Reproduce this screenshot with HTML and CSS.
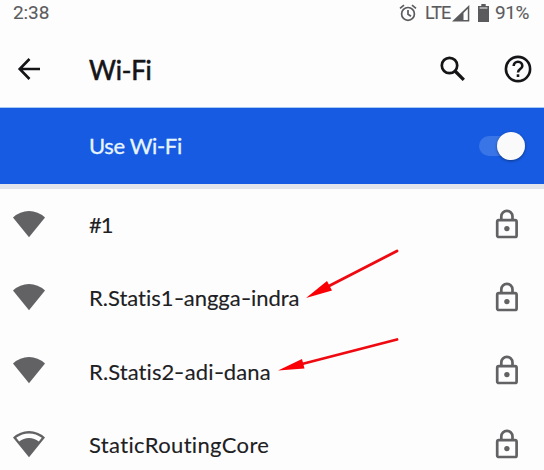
FILE: index.html
```html
<!DOCTYPE html>
<html lang="en">
<head>
<meta charset="utf-8">
<title>Wi-Fi</title>
<link rel="stylesheet" href="styles.css">
</head>
<body>
<svg width="0" height="0" class="defs">
  <symbol id="wifi" viewBox="0 0 34 28"><path d="M1 7.500Q8 1 17 1T33 7.500L17 27.300Z"/></symbol>
  <symbol id="wifi-mid" viewBox="0 0 34 28"><path fill-rule="evenodd" d="M1 7.500Q8 1 17 1T33 7.500L17 27.300ZM4.200 7.700L7.200 11.500Q11.500 8 17 8T26.800 11.500L29.800 7.700Q24 3.400 17 3.400T4.200 7.700Z"/></symbol>
  <symbol id="lock" viewBox="0 0 24 30"><g fill="none" stroke="currentColor" stroke-width="2.700"><rect x="2.200" y="11.200" width="19.400" height="16.800" rx="1.600"/><path d="M6.300 11V7.400a5.600 5.600 0 0 1 11.200 0V11"/></g><circle cx="11.900" cy="19.600" r="2.700"/></symbol>
</svg>
<div class="screen">
  <div class="status">
    <span class="time">2:38</span>
    <svg class="alarm" width="18" height="18" viewBox="0 0 18 18" fill="none" stroke="currentColor" stroke-width="1.700"><circle cx="9" cy="9.900" r="6.400"/><path d="M1 4.400L5 1.200M17 4.400L13 1.200M9 6v4.200l3 2"/></svg>
    <span class="lte">LTE</span>
    <svg class="signal" width="18" height="17" viewBox="0 0 18 17"><path fill-rule="evenodd" d="M0 16.500L17.300 0V16.500ZM11.500 15H15.800V3.800L11.500 8Z"/></svg>
    <svg class="battery" width="11" height="18" viewBox="0 0 11 18"><path d="M3.300 0H7.700V2H11V18H0V2H3.300Z"/><path d="M1.600 4H9.400" stroke="#ddd" stroke-width="1.200"/></svg>
    <span class="percent">91%</span>
  </div>
  <header class="bar">
    <svg class="back" width="24" height="24" viewBox="0 0 24 24" fill="none" stroke="currentColor" stroke-width="2.600"><path d="M23 12H3M12.500 2L2.700 12l9.800 10"/></svg>
    <h1>Wi-Fi</h1>
    <svg class="search" width="26" height="26" viewBox="0 0 26 26" fill="none" stroke="currentColor"><circle cx="9.500" cy="9.500" r="7.700" stroke-width="2.700"/><path d="M15 15l8.800 8.800" stroke-width="3.300"/></svg>
    <svg class="help" width="28" height="28" viewBox="0 0 28 28" fill="none" stroke="currentColor" stroke-width="2.600"><circle cx="14" cy="14" r="12.100"/><path d="M9.700 11a4.300 4.300 0 0 1 8.600 0c0 3-4.300 3.200-4.300 6.400"/><path d="M14 19.300v2.700"/></svg>
  </header>
  <div class="toggle">
    <span class="use">Use Wi-Fi</span>
    <span class="switch"><span class="thumb"></span></span>
  </div>
  <ul class="list">
    <li><svg class="wifi"><use href="#wifi"/></svg><span class="name n1">#1</span><svg class="lock"><use href="#lock"/></svg></li>
    <li><svg class="wifi"><use href="#wifi"/></svg><span class="name n2">R.Statis1<i>-</i>angga<i>-</i>indra</span><svg class="lock"><use href="#lock"/></svg></li>
    <li><svg class="wifi"><use href="#wifi"/></svg><span class="name n3">R.Statis2<i>-</i>adi<i>-</i>dana</span><svg class="lock"><use href="#lock"/></svg></li>
    <li><svg class="wifi"><use href="#wifi-mid"/></svg><span class="name n4">StaticRoutingCore</span><svg class="lock"><use href="#lock"/></svg></li>
  </ul>
  <svg class="arrows" width="544" height="470" viewBox="0 0 544 470"><g stroke="#ee0a10" stroke-width="2.800" stroke-linecap="round"><path d="M397 251L328 286.500M397 339.500L300 364.500"/></g><path fill="#fa0006" d="M306 298L327 281L332 290.500ZM278 370.500L302 359L304.500 368.500Z"/></svg>
</div>
</body>
</html>
```
FILE: styles.css
```css
* { box-sizing: border-box; }
body { margin: 0; background: #fdfdfd; color: #202023; font-family: Lato, "Open Sans", sans-serif; font-variant-ligatures: none; }
svg { display: block; flex: none; }
.defs { position: absolute; }
.screen { position: relative; width: 544px; height: 470px; overflow: hidden; }
.status { display: flex; align-items: center; height: 26px; padding: 0 0 0 13px; color: #5b5b5e; font: 19px/26px Roboto, sans-serif; white-space: nowrap; -webkit-text-stroke: .1px; }
.time { width: 386px; letter-spacing: -.1px; }
.lte { width: 27px; margin-left: 8px; font-size: 18px; letter-spacing: -1px; }
.battery { margin-left: 8px; }
.signal, .battery { fill: currentColor; }
.percent { margin-left: 6px; letter-spacing: -.4px; }
.bar { display: flex; align-items: center; height: 81px; padding: 5px 12px 0 17px; color: #151517; }
h1 { width: 350px; margin: 2px 0 0 48px; font-size: 26px; line-height: 36px; font-weight: 400; letter-spacing: -.2px; -webkit-text-stroke: .6px; }
.search { margin-left: 1px; }
.help { margin-left: auto; }
.toggle { display: flex; align-items: center; justify-content: space-between; height: 82px; padding: 0 19px 0 89px; border-top: 1px solid #a9c9f5; border-bottom: 5px solid #e2e5ec; background: #165be1; color: #e8f5ff; }
.use { font-size: 22px; letter-spacing: -.35px; -webkit-text-stroke: .3px; margin-top: -1px; }
.switch { display: flex; align-items: center; justify-content: flex-end; width: 46px; height: 20px; border-radius: 10px; background: #3a75e8; }
.thumb { width: 28px; height: 28px; flex: none; border-radius: 50%; background: #fafafa; box-shadow: 0 1px 3px #0006; }
.list { margin: 0; padding: 0; list-style: none; }
.list li { display: flex; align-items: center; height: 73.3px; padding: 0 25px 0 12px; }
.wifi { width: 34px; height: 28px; fill: #626164; margin-top: -4px; }
.name { margin: -1px 0 0 43px; font-size: 22px; line-height: 30px; white-space: nowrap; -webkit-text-stroke: .12px; }
.n1 { letter-spacing: -1px; }
.n3 { letter-spacing: .1px; }
.n4 { letter-spacing: .35px; }
.name i { display: inline-block; font-style: normal; transform: scaleX(1.3); margin: 0 1px; }
.lock { width: 24px; height: 30px; margin-left: auto; margin-top: -4px; color: #626164; fill: #626164; }
.arrows { position: absolute; left: 0; top: 0; }
```
